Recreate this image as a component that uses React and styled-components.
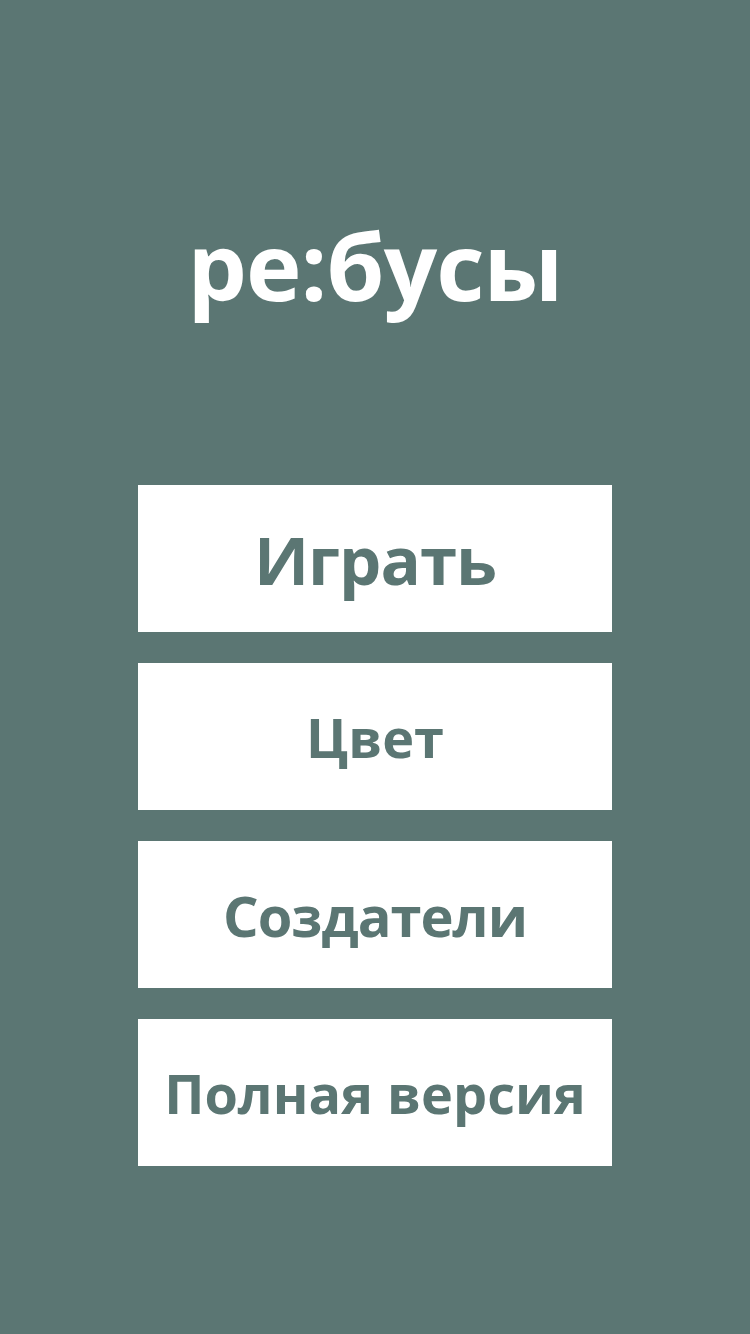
import React from "react";
import styled, { createGlobalStyle } from "styled-components";

const GlobalStyle = createGlobalStyle`
  html, body {
    margin: 0;
    padding: 0;
    background-color: #5b7673;
  }
  * {
    box-sizing: border-box;
  }
`;

const Screen = styled.main`
  display: flex;
  flex-direction: column;
  align-items: center;
  width: 750px;
  height: 1334px;
  background-color: #5b7673;
  font-family: "Open Sans", "Noto Sans", sans-serif;
`;

const Title = styled.h1`
  margin: 200px 0 0;
  height: 140px;
  line-height: 130px;
  font-size: 94px;
  font-weight: 700;
  letter-spacing: -1px;
  color: #ffffff;
`;

const Menu = styled.nav`
  display: flex;
  flex-direction: column;
  gap: 31px;
  margin-top: 145px;
`;

const MenuButton = styled.button`
  display: flex;
  align-items: center;
  justify-content: center;
  width: 474px;
  height: 147px;
  padding: 0;
  border: none;
  background-color: #ffffff;
  color: #5b7673;
  font-family: inherit;
  font-weight: 700;
  font-size: ${(p) => p.$size}px;
  letter-spacing: ${(p) => p.$spacing || 0}px;
  cursor: pointer;
`;

const items = [
  { label: "Играть", size: 67, spacing: -1 },
  { label: "Цвет", size: 54 },
  { label: "Создатели", size: 56, spacing: -1 },
  { label: "Полная версия", size: 54 },
];

export default function App() {
  return (
    <>
      <GlobalStyle />
      <Screen>
        <Title>ре:бусы</Title>
        <Menu>
          {items.map((item) => (
            <MenuButton key={item.label} $size={item.size} $spacing={item.spacing}>
              {item.label}
            </MenuButton>
          ))}
        </Menu>
      </Screen>
    </>
  );
}
